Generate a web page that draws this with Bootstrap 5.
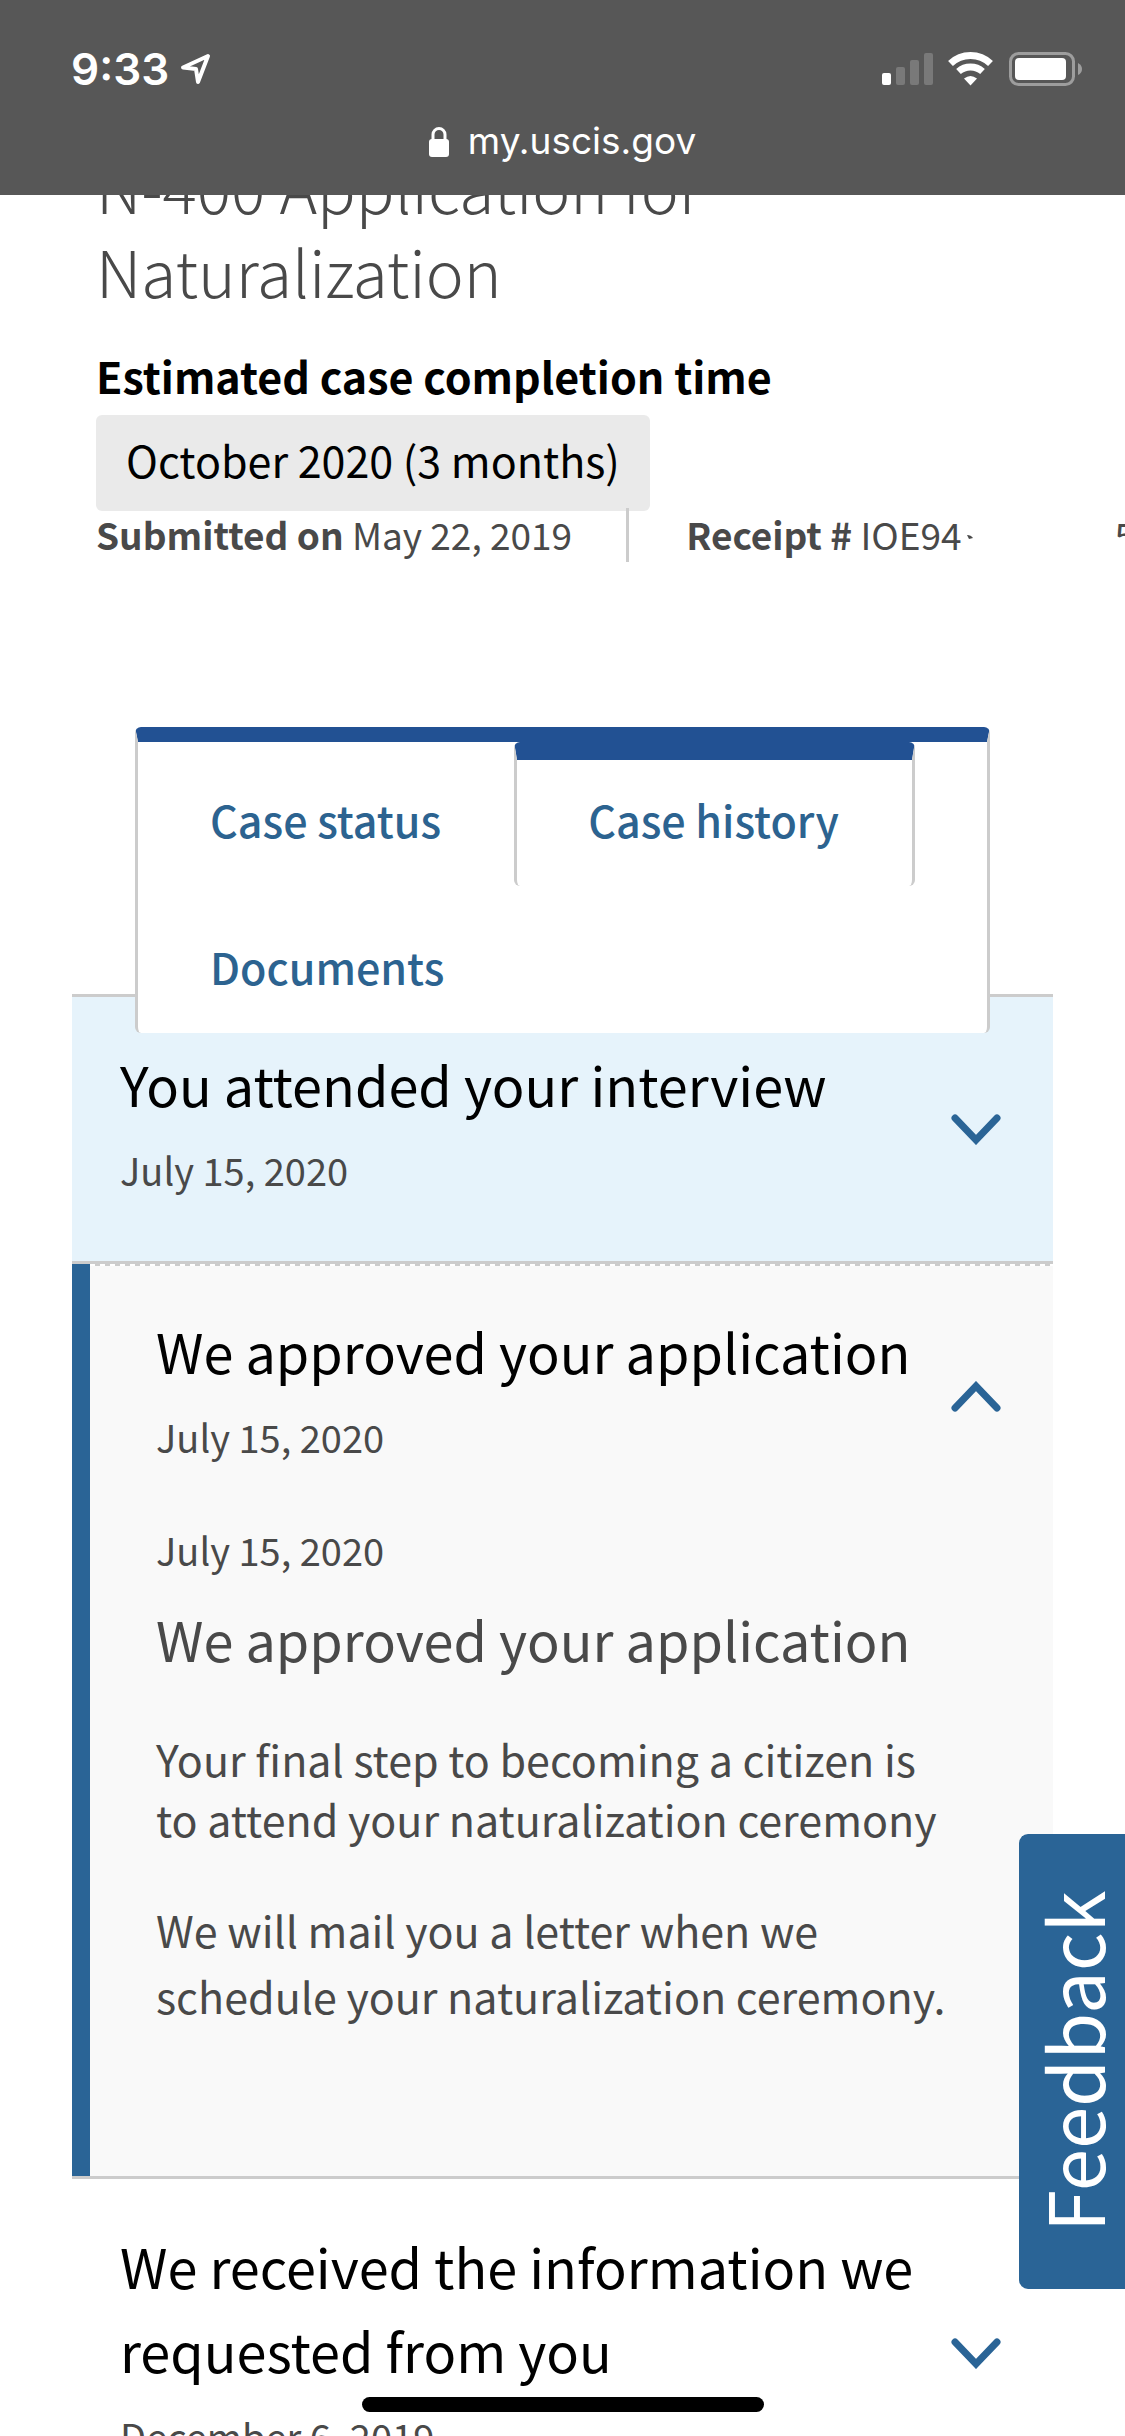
<!DOCTYPE html>
<html lang="en">
<head>
<meta charset="utf-8">
<meta name="viewport" content="width=device-width, initial-scale=1">
<title>N-400 Application for Naturalization</title>
<link href="https://cdn.jsdelivr.net/npm/bootstrap@5.3.0/dist/css/bootstrap.min.css" rel="stylesheet">
<style>
:root { --ink: #494949; --link: #2c6390; --rule: #ccc; --brand: #2a6496; --navy: #225193; }
body { font-family: "Noto Sans CJK SC", "Noto Sans", sans-serif; color: var(--ink); background: #fff; }
.phone-bar { background: #575757; height: 195px; font-family: Inter, sans-serif; padding: 42px 43px 0 71px; }
.clock-row { gap: 11px; }
.clock { font-size: 44px; line-height: 54px; font-weight: 600; }
.site-url { font-size: 37px; line-height: 46px; margin-top: 22px; gap: 19px; margin-left: -28px; }
.case-head { padding: 144px 96px 0; }
.case-title { font-weight: 300; font-size: 64px; line-height: 84px; max-width: 720px; }
.eta-label { font-size: 43px; line-height: 60px; margin-top: 33px; }
.eta-value { font-size: 43px; line-height: 60px; margin-top: 10px; padding: 14px 30px 22px; background: #eaeaea; border-radius: 6px; }
.case-meta { font-size: 37px; line-height: 52px; margin-top: -3px; white-space: nowrap; }
.case-meta li { height: 54px; }
.case-meta li + li { border-left: 3px solid var(--rule); margin-left: 54px; padding-left: 57px; }
.scrap { width: 8px; height: 50px; margin-left: 4px; }
.half-digit { height: 33px; overflow: hidden; margin-left: 141px; }
.case-tabs { margin: 165px 135px 0; border: 3px solid var(--rule); border-top: 15px solid var(--navy); border-bottom: 0; border-radius: 6px; row-gap: 3px; z-index: 1; }
.case-tabs .nav-link { height: 144px; border: 3px solid transparent; border-width: 18px 3px 0; border-radius: 6px; padding: 0 70px 8px 69px; color: var(--link); font-size: 43px; line-height: 60px; font-weight: 500; }
.case-tabs .nav-link.active { border-color: var(--navy) var(--rule) transparent; padding-left: 71px; padding-right: 73px; }
.history { margin: -39px 72px 0; border-top: 3px solid var(--rule); }
.event { border-bottom: 3px solid var(--rule); }
.event-new { background: #e6f3fb; }
.event-open { background: #f9f9f9; }
.event-toggle { padding: 0 52px 0 48px; color: #000; }
.event-text { padding: 45px 0 61px; }
.event-name { font-size: 54px; line-height: 84px; font-weight: 400; }
.event-date { font-size: 38px; line-height: 60px; margin-top: 14px; color: var(--ink); }
.chevron { width: 50px; height: 31px; }
.open-inner { border-left: 18px solid var(--brand); background: repeating-linear-gradient(90deg, #fff 0 5px, var(--rule) 5px 10px) top / 100% 2px no-repeat; }
.open-inner .event-toggle { padding-left: 66px; }
.event-body { margin-top: -8px; padding: 0 100px 148px 66px; }
.event-body .event-date { margin: 0; }
.event-body .event-name { margin-top: 17px; white-space: nowrap; }
.event-body p { font-size: 43px; }
.step-note { line-height: 60px; margin-top: 47px; }
.mail-note { line-height: 66px; margin-top: 48px; }
.feedback { bottom: 147px; right: 0; width: 106px; height: 455px; z-index: 5; background: var(--brand); border-radius: 0 9px 9px 0; writing-mode: vertical-rl; transform: rotate(180deg); font-size: 76px; line-height: 106px; }
.home-line { bottom: 24px; left: 50%; width: 402px; height: 15px; margin-left: -201px; border-radius: 8px; background: #000; z-index: 6; }
</style>
<script src="https://cdn.jsdelivr.net/npm/bootstrap@5.3.0/dist/js/bootstrap.bundle.min.js"></script>
</head>
<body class="vh-100 overflow-hidden">
<header class="phone-bar fixed-top text-white">
  <div class="d-flex justify-content-between align-items-center">
    <div class="clock-row d-flex align-items-center">
      <span class="clock">9:33</span>
      <svg width="31" height="32" viewBox="0 0 31 32" fill="none" stroke="#fff" stroke-width="4" stroke-linejoin="round" aria-hidden="true"><path d="M28 3 3 14.500 16 16l2 13z"/></svg>
    </div>
    <svg width="201" height="36" viewBox="0 0 201 36" aria-hidden="true">
      <rect x="1" y="22" width="9" height="12" rx="2" fill="#fff"/>
      <g fill="#797979"><rect x="15" y="16" width="9" height="18" rx="2"/><rect x="29" y="9" width="9" height="25" rx="2"/><rect x="43" y="2" width="9" height="32" rx="2"/></g>
      <g fill="none" stroke="#fff"><path d="M69.500 12.500a29 29 0 0 1 40 0" stroke-width="7"/><path d="M77.500 20.500a18 18 0 0 1 24 0" stroke-width="7"/></g>
      <path d="M83 27.500q6.500-5 13 0L89.500 34.500z" fill="#fff"/>
      <rect x="129.500" y="2.500" width="63" height="31" rx="8" fill="none" stroke="#9d9d9d" stroke-width="3"/>
      <rect x="134" y="7" width="51" height="22" rx="4" fill="#fff"/>
      <path d="M197 12q4 2 4 6t-4 6z" fill="#9d9d9d"/>
    </svg>
  </div>
  <div class="site-url d-flex justify-content-center align-items-center">
    <svg width="20" height="31" viewBox="0 0 20 31" aria-hidden="true"><path d="M4 15V8.500a6 6 0 0 1 12 0V15" fill="none" stroke="#fff" stroke-width="3"/><rect y="13" width="20" height="18" rx="3" fill="#fff"/></svg>
    <span>my.uscis.gov</span>
  </div>
</header>

<main>
  <section class="case-head">
    <h1 class="case-title mb-0">N-400 Application for Naturalization</h1>
    <h2 class="eta-label fw-bold text-black mb-0">Estimated case completion time</h2>
    <div class="eta-value d-inline-block text-black">October 2020 (3 months)</div>
    <ul class="case-meta list-unstyled d-flex mb-0">
      <li><strong class="fw-bold">Submitted on</strong> May 22, 2019</li>
      <li class="d-flex"><span><strong class="fw-bold">Receipt #</strong> IOE94</span><svg class="scrap" viewBox="0 0 8 50" aria-hidden="true"><path d="M1 27q4 0 6 3l-4 1z" fill="#494949"/></svg><span class="half-digit">5</span></li>
    </ul>
  </section>

  <nav class="case-tabs nav position-relative bg-white" aria-label="Case">
    <a class="nav-link d-flex align-items-center" href="#status">Case status</a>
    <a class="nav-link d-flex align-items-center active" href="#history" aria-current="page">Case history</a>
    <a class="nav-link d-flex align-items-center" href="#documents">Documents</a>
  </nav>

  <section class="history" id="history">
    <article class="event event-new">
      <button type="button" class="event-toggle btn border-0 rounded-0 w-100 text-start d-flex justify-content-between align-items-center" aria-expanded="false">
        <span class="event-text"><span class="event-name d-block">You attended your interview</span><span class="event-date d-block">July 15, 2020</span></span>
        <svg class="chevron flex-shrink-0" viewBox="0 0 50 31" fill="none" stroke="#2a6496" stroke-width="7" stroke-linecap="round" aria-hidden="true"><path d="m4 4 21 22L46 4"/></svg>
      </button>
    </article>
    <article class="event event-open">
      <div class="open-inner">
        <button type="button" class="event-toggle btn border-0 rounded-0 w-100 text-start d-flex justify-content-between align-items-center" aria-expanded="true">
          <span class="event-text"><span class="event-name d-block">We approved your application</span><span class="event-date d-block">July 15, 2020</span></span>
          <svg class="chevron flex-shrink-0" viewBox="0 0 50 31" fill="none" stroke="#2a6496" stroke-width="7" stroke-linecap="round" aria-hidden="true"><path d="M4 27 25 5l21 22"/></svg>
        </button>
        <div class="event-body">
          <div class="event-date">July 15, 2020</div>
          <h3 class="event-name mb-0">We approved your application</h3>
          <p class="step-note mb-0">Your final step to becoming a citizen is to attend your naturalization ceremony</p>
          <p class="mail-note mb-0">We will mail you a letter when we schedule your naturalization ceremony.</p>
        </div>
      </div>
    </article>
    <article class="event">
      <button type="button" class="event-toggle btn border-0 rounded-0 w-100 text-start d-flex justify-content-between align-items-center" aria-expanded="false">
        <span class="event-text"><span class="event-name d-block">We received the information we requested from you</span><span class="event-date d-block">December 6, 2019</span></span>
        <svg class="chevron flex-shrink-0" viewBox="0 0 50 31" fill="none" stroke="#2a6496" stroke-width="7" stroke-linecap="round" aria-hidden="true"><path d="m4 4 21 22L46 4"/></svg>
      </button>
    </article>
  </section>
</main>

<button type="button" class="feedback position-fixed border-0 p-0 text-white text-center">Feedback</button>
<div class="home-line position-fixed"></div>
</body>
</html>
